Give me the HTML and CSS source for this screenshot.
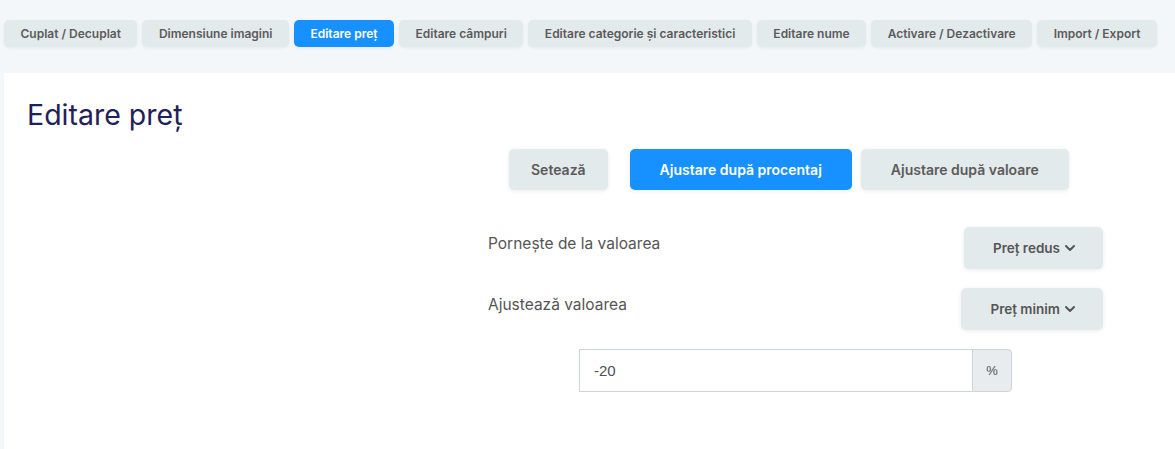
FILE: index.html
```html
<!DOCTYPE html>
<html lang="ro">
<head>
  <meta charset="UTF-8" />
  <title>Editare preț</title>
  <link rel="stylesheet" href="styles.css">
</head>
<body>
  <nav class="tabs">
    <button class="tab">Cuplat / Decuplat</button>
    <button class="tab">Dimensiune imagini</button>
    <button class="tab activ">Editare preț</button>
    <button class="tab">Editare câmpuri</button>
    <button class="tab">Editare categorie și caracteristici</button>
    <button class="tab">Editare nume</button>
    <button class="tab">Activare / Dezactivare</button>
    <button class="tab">Import / Export</button>
  </nav>
  <main class="panou">
    <h1 class="titlu">Editare preț</h1>
    <div class="formular">
      <div class="moduri">
        <button class="mod mod-seteaza">Setează</button>
        <button class="mod activ">Ajustare după procentaj</button>
        <button class="mod mod-valoare">Ajustare după valoare</button>
      </div>
      <div class="rand">
        <span class="eticheta">Pornește de la valoarea</span>
        <button class="dropdown">Preț redus
          <svg width="12" height="12" viewBox="0 0 12 12"><path d="M2 4l4 4 4-4" fill="none" stroke="currentColor" stroke-width="2" stroke-linecap="round" stroke-linejoin="round"/></svg>
        </button>
      </div>
      <div class="rand">
        <span class="eticheta">Ajustează valoarea</span>
        <button class="dropdown">Preț minim
          <svg width="12" height="12" viewBox="0 0 12 12"><path d="M2 4l4 4 4-4" fill="none" stroke="currentColor" stroke-width="2" stroke-linecap="round" stroke-linejoin="round"/></svg>
        </button>
      </div>
      <div class="grup-input">
        <input type="text" value="-20" />
        <span class="sufix">%</span>
      </div>
    </div>
  </main>
</body>
</html>
```

FILE: styles.css
```css
/* Reset */
* {
  box-sizing: border-box;
  margin: 0; padding: 0;
  font-family: Inter, 'Open Sans', sans-serif;
}
body {
  background: #f4f7fa;
  min-height: 100vh;
}

.tabs {
  display: flex;
  gap: 5px;
  padding: 20px 4px 0;
  height: 73px;
}
.tab {
  height: 27px;
  padding: 0 16.5px;
  border: none;
  border-radius: 5px;
  background: #e3eaeb;
  color: #5b5b5b;
  font-size: 12px;
  font-weight: 600;
  box-shadow: 0 1px 3px rgba(0, 0, 0, 0.06);
  cursor: pointer;
}
.tab.activ {
  background: #1791ff;
  color: #fff;
}

.panou {
  background: #fff;
  margin-left: 4px;
  height: 376px;
  padding: 22px 23px;
}
.titlu {
  font-size: 28.5px;
  font-weight: 400;
  color: #1f2158;
  line-height: 40px;
}

.formular {
  width: 615px;
  margin: 14px 0 0 461px;
}
.moduri {
  display: flex;
  margin: 0 0 37px 21px;
}
.mod {
  height: 41px;
  padding: 0 30px;
  border: none;
  border-radius: 5px;
  background: #e3eaeb;
  color: #5b5b5b;
  font-size: 14px;
  font-weight: 600;
  box-shadow: 0 1px 4px rgba(0, 0, 0, 0.08);
  cursor: pointer;
}
.mod.activ {
  background: #1791ff;
  color: #fff;
}
.mod-seteaza {
  padding: 0 22px;
  margin-right: 22px;
}
.mod-valoare { margin-left: 9px; }

.rand {
  display: flex;
  justify-content: space-between;
  align-items: flex-start;
  margin-bottom: 19px;
}
.eticheta {
  font-size: 15.5px;
  color: #555;
  padding-top: 7px;
}
.dropdown {
  display: flex;
  align-items: center;
  gap: 4px;
  height: 42px;
  padding: 0 27px 0 29px;
  border: none;
  border-radius: 5px;
  background: #e3eaeb;
  color: #555;
  font-size: 13.5px;
  font-weight: 600;
  box-shadow: 0 1px 4px rgba(0, 0, 0, 0.08);
  cursor: pointer;
}

.grup-input {
  display: flex;
  width: 433px;
  height: 43px;
  margin: 0 auto;
}
.grup-input input {
  flex: 1;
  border: 1px solid #ced4da;
  border-right: none;
  padding: 0 14px;
  font-size: 15px;
  color: #495057;
  font-family: 'Liberation Sans', sans-serif;
}
.sufix {
  width: 40px;
  display: flex;
  align-items: center;
  justify-content: center;
  background: #e9ecef;
  border: 1px solid #ced4da;
  border-radius: 0 4px 4px 0;
  color: #495057;
  font-size: 13px;
  font-family: 'Liberation Sans', sans-serif;
}
```
